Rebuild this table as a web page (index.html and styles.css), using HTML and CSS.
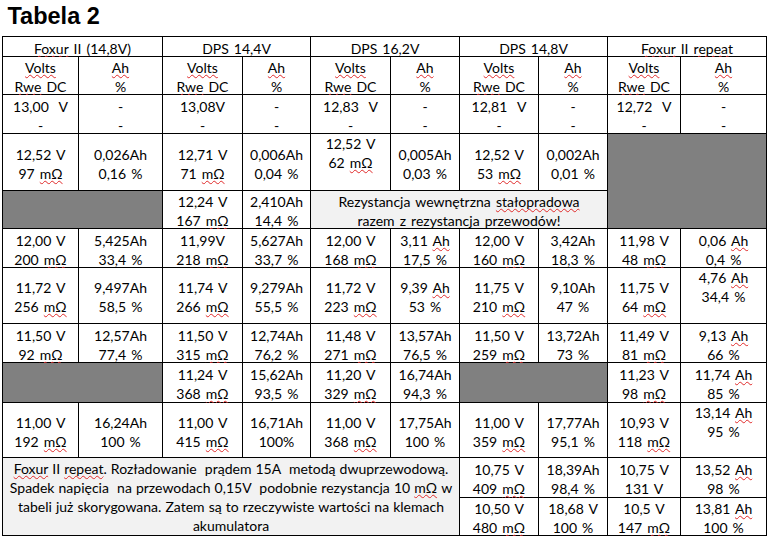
FILE: index.html
```html
<!DOCTYPE html>
<html lang="pl">
<head>
<meta charset="utf-8">
<title>Tabela 2</title>
<link rel="stylesheet" href="styles.css">
</head>
<body>
<header class="head"><h1 class="title">Tabela 2</h1></header>
<div class="tbl">
  <div class="c s2"><p><u class="sp">Foxur</u> II (14,8V)</p></div>
  <div class="c s2"><p>DPS 14,4V</p></div>
  <div class="c s2"><p>DPS 16,2V</p></div>
  <div class="c s2"><p>DPS 14,8V</p></div>
  <div class="c s2"><p><u class="sp">Foxur</u> II <u class="sp">repeat</u></p></div>

  <div class="c"><p><u class="sp">Volts</u><br><u class="sp">Rwe</u> DC</p></div>
  <div class="c"><p><u class="sp">Ah</u><br>%</p></div>
  <div class="c"><p><u class="sp">Volts</u><br><u class="sp">Rwe</u> DC</p></div>
  <div class="c"><p><u class="sp">Ah</u><br>%</p></div>
  <div class="c"><p><u class="sp">Volts</u><br><u class="sp">Rwe</u> DC</p></div>
  <div class="c"><p><u class="sp">Ah</u><br>%</p></div>
  <div class="c"><p><u class="sp">Volts</u><br><u class="sp">Rwe</u> DC</p></div>
  <div class="c"><p><u class="sp">Ah</u><br>%</p></div>
  <div class="c"><p><u class="sp">Volts</u><br><u class="sp">Rwe</u> DC</p></div>
  <div class="c"><p><u class="sp">Ah</u><br>%</p></div>

  <div class="c"><p>13,00 &nbsp;V<br>-</p></div>
  <div class="c"><p>-<br>-</p></div>
  <div class="c"><p>13,08V<br>-</p></div>
  <div class="c"><p>-<br>-</p></div>
  <div class="c"><p>12,83 &nbsp;V<br>-</p></div>
  <div class="c"><p>-<br>-</p></div>
  <div class="c"><p>12,81 &nbsp;V<br>-</p></div>
  <div class="c"><p>-<br>-</p></div>
  <div class="c"><p>12,72 &nbsp;V<br>-</p></div>
  <div class="c"><p>-<br>-</p></div>

  <div class="c"><p>12,52 V<br>97 <u class="sp">mΩ</u></p></div>
  <div class="c"><p>0,026Ah<br>0,16 %</p></div>
  <div class="c"><p>12,71 V<br>71 <u class="sp">mΩ</u></p></div>
  <div class="c"><p>0,006Ah<br>0,04 %</p></div>
  <div class="c top"><p>12,52 V<br>62 <u class="sp">mΩ</u></p></div>
  <div class="c"><p>0,005Ah<br>0,03 %</p></div>
  <div class="c"><p>12,52 V<br>53 <u class="sp">mΩ</u></p></div>
  <div class="c"><p>0,002Ah<br>0,01 %</p></div>
  <div class="c dark s2 r2"></div>

  <div class="c dark s2"></div>
  <div class="c"><p>12,24 V<br>167 <u class="sp">mΩ</u></p></div>
  <div class="c"><p>2,410Ah<br>14,4 %</p></div>
  <div class="c light s4"><p>Rezystancja wewnętrzna <u class="sp">stałopradowa</u><br>razem z rezystancja przewodów!</p></div>

  <div class="c"><p>12,00 V<br>200 <u class="sp">mΩ</u></p></div>
  <div class="c"><p>5,425Ah<br>33,4 %</p></div>
  <div class="c"><p>11,99V<br>218 <u class="sp">mΩ</u></p></div>
  <div class="c"><p>5,627Ah<br>33,7 %</p></div>
  <div class="c"><p>12,00 V<br>168 <u class="sp">mΩ</u></p></div>
  <div class="c"><p>3,11 <u class="sp">Ah</u><br>17,5 %</p></div>
  <div class="c"><p>12,00 V<br>160 <u class="sp">mΩ</u></p></div>
  <div class="c"><p>3,42Ah<br>18,3 %</p></div>
  <div class="c"><p>11,98 V<br>48 <u class="sp">mΩ</u></p></div>
  <div class="c"><p>0,06 <u class="sp">Ah</u><br>0,4 %</p></div>

  <div class="c"><p>11,72 V<br>256 <u class="sp">mΩ</u></p></div>
  <div class="c"><p>9,497Ah<br>58,5 %</p></div>
  <div class="c"><p>11,74 V<br>266 <u class="sp">mΩ</u></p></div>
  <div class="c"><p>9,279Ah<br>55,5 %</p></div>
  <div class="c"><p>11,72 V<br>223 <u class="sp">mΩ</u></p></div>
  <div class="c"><p>9,39 <u class="sp">Ah</u><br>53 %</p></div>
  <div class="c"><p>11,75 V<br>210 <u class="sp">mΩ</u></p></div>
  <div class="c"><p>9,10Ah<br>47 %</p></div>
  <div class="c"><p>11,75 V<br>64 <u class="sp">mΩ</u></p></div>
  <div class="c top"><p>4,76 <u class="sp">Ah</u><br>34,4 %</p></div>

  <div class="c"><p>11,50 V<br>92 <u class="sp">mΩ</u></p></div>
  <div class="c"><p>12,57Ah<br>77,4 %</p></div>
  <div class="c"><p>11,50 V<br>315 <u class="sp">mΩ</u></p></div>
  <div class="c"><p>12,74Ah<br>76,2 %</p></div>
  <div class="c"><p>11,48 V<br>271 <u class="sp">mΩ</u></p></div>
  <div class="c"><p>13,57Ah<br>76,5 %</p></div>
  <div class="c"><p>11,50 V<br>259 <u class="sp">mΩ</u></p></div>
  <div class="c"><p>13,72Ah<br>73 %</p></div>
  <div class="c"><p>11,49 V<br>81 <u class="sp">mΩ</u></p></div>
  <div class="c"><p>9,13 <u class="sp">Ah</u><br>66 %</p></div>

  <div class="c dark s2"></div>
  <div class="c"><p>11,24 V<br>368 <u class="sp">mΩ</u></p></div>
  <div class="c"><p>15,62Ah<br>93,5 %</p></div>
  <div class="c"><p>11,20 V<br>329 <u class="sp">mΩ</u></p></div>
  <div class="c"><p>16,74Ah<br>94,3 %</p></div>
  <div class="c dark s2"></div>
  <div class="c"><p>11,23 V<br>98 <u class="sp">mΩ</u></p></div>
  <div class="c"><p>11,74 <u class="sp">Ah</u><br>85 %</p></div>

  <div class="c"><p>11,00 V<br>192 <u class="sp">mΩ</u></p></div>
  <div class="c"><p>16,24Ah<br>100 %</p></div>
  <div class="c"><p>11,00 V<br>415 <u class="sp">mΩ</u></p></div>
  <div class="c"><p>16,71Ah<br>100%</p></div>
  <div class="c"><p>11,00 V<br>368 <u class="sp">mΩ</u></p></div>
  <div class="c"><p>17,75Ah<br>100 %</p></div>
  <div class="c"><p>11,00 V<br>359 <u class="sp">mΩ</u></p></div>
  <div class="c"><p>17,77Ah<br>95,1 %</p></div>
  <div class="c"><p>10,93 V<br>118 <u class="sp">mΩ</u></p></div>
  <div class="c top"><p>13,14 <u class="sp">Ah</u><br>95 %</p></div>

  <div class="c light note s6 r2"><p><u class="sp">Foxur</u> II <u class="sp">repeat</u>. Rozładowanie &nbsp;prądem 15A &nbsp;metodą dwuprzewodową.<br>Spadek napięcia &nbsp;na przewodach 0,15V &nbsp;podobnie rezystancja 10 <u class="sp">mΩ</u> w<br>tabeli już skorygowana. Zatem są to rzeczywiste wartości na klemach<br>akumulatora</p></div>
  <div class="c"><p>10,75 V<br>409 <u class="sp">mΩ</u></p></div>
  <div class="c"><p>18,39Ah<br>98,4 %</p></div>
  <div class="c"><p>10,75 V<br>131 V</p></div>
  <div class="c"><p>13,52 <u class="sp">Ah</u><br>98 %</p></div>

  <div class="c"><p>10,50 V<br>480 <u class="sp">mΩ</u></p></div>
  <div class="c"><p>18,68 V<br>100 %</p></div>
  <div class="c"><p>10,5 V<br>147 <u class="sp">mΩ</u></p></div>
  <div class="c"><p>13,81 <u class="sp">Ah</u><br>100 %</p></div>
</div>
</body>
</html>
```

FILE: styles.css
```css
html, body {
  margin: 0;
  padding: 0;
  background: #ffffff;
}

.head {
  height: 36px;
  box-sizing: border-box;
  padding: 3px 0 0 7.5px;
}

.title {
  margin: 0;
  font-family: "Liberation Sans", Arial, sans-serif;
  font-weight: bold;
  font-size: 23.5px;
  line-height: 27px;
  color: #000;
}

.tbl {
  display: grid;
  width: max-content;
  margin-left: 2px;
  padding: 1px;
  gap: 1px;
  background: #000;
  grid-template-columns: 75px 83px 79px 67px 79px 68px 78px 68px 72px 85px;
  grid-template-rows: 19px 37px 38px 56px 37px 38px 55px 38px 39px 54px 39px 37px;
  font-family: Lato, "Open Sans", sans-serif;
  font-size: 14px;
  line-height: 19px;
  color: #000;
  word-spacing: 1.5px;
}

.c {
  background: #ffffff;
  display: flex;
  align-items: center;
  justify-content: center;
  text-align: center;
  padding-top: 3px;
  box-sizing: border-box;
  overflow: visible;
  min-height: 0;
}

.c p {
  margin: 0;
  white-space: nowrap;
}

.c.top {
  align-items: flex-start;
  padding-top: 0;
}

.s2 { grid-column: span 2; }
.s4 { grid-column: span 4; }
.s6 { grid-column: span 6; }
.r2 { grid-row: span 2; }

.dark { background: #808080; }
.light { background: #f2f2f2; }

.note {
  padding-top: 0;
  word-spacing: 0.5px;
}

.sp {
  text-decoration-line: underline;
  text-decoration-style: wavy;
  text-decoration-color: #e02a2a;
  text-decoration-thickness: 1px;
  text-underline-offset: 1px;
  text-decoration-skip-ink: none;
}
```
